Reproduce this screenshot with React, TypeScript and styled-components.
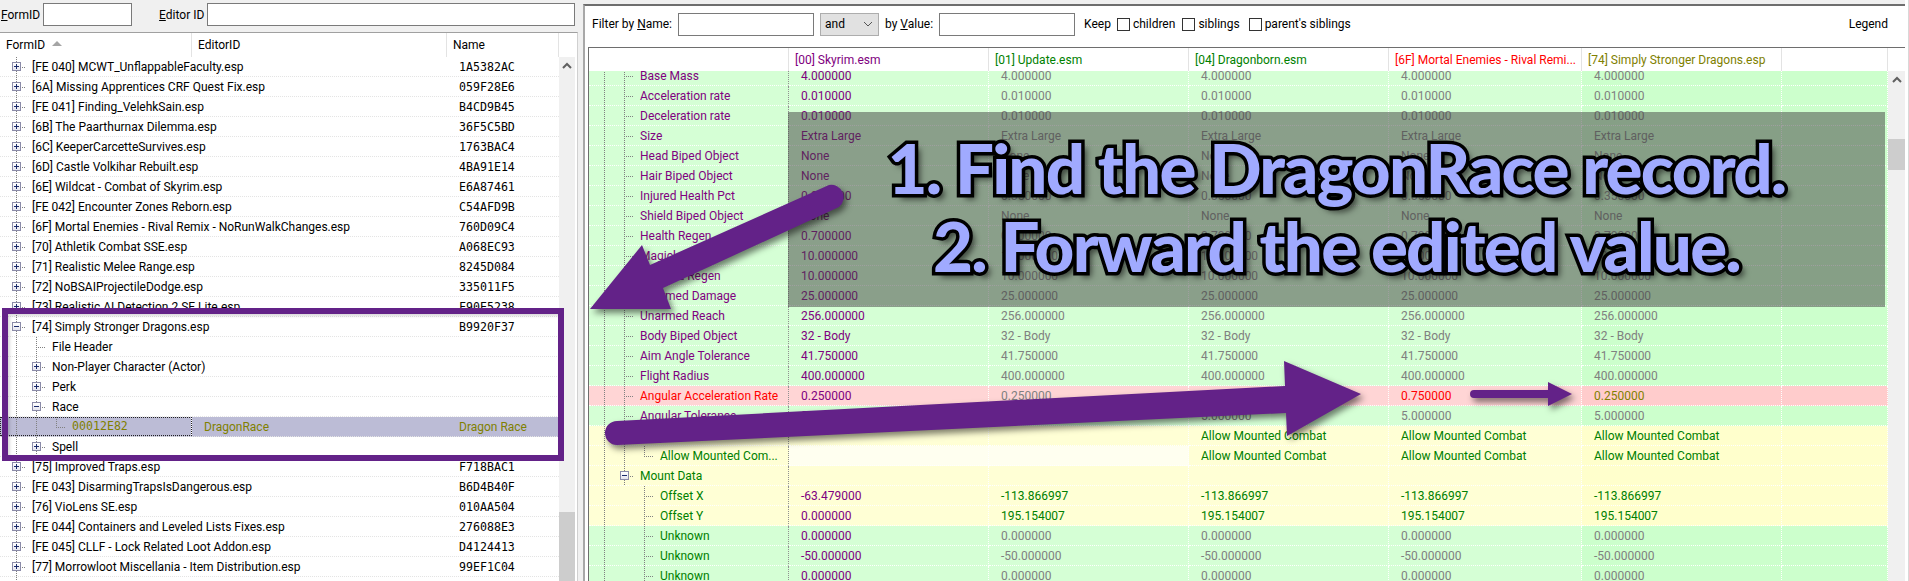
import React from 'react';
import styled, { createGlobalStyle } from 'styled-components';

const GlobalStyle = createGlobalStyle`
  html, body {
    margin: 0;
    padding: 0;
    background: #f0f0f0;
  }
  body {
    font-family: Roboto, 'Liberation Sans', sans-serif;
    font-size: 12px;
    color: #000;
    overflow: hidden;
  }
`;

const PURPLE = '#632288';
const dotsV = 'repeating-linear-gradient(to bottom, #808080 0 1px, transparent 1px 2px)';
const dotsH = 'repeating-linear-gradient(to right, #808080 0 1px, transparent 1px 2px)';

const Page = styled.div`
  position: relative;
  display: flex;
  width: 1909px;
  height: 581px;
  overflow: hidden;
`;

const LeftPane = styled.div`
  display: flex;
  flex-direction: column;
  width: 578px;
  flex: none;
`;

const IdFilter = styled.div`
  display: flex;
  align-items: center;
  height: 32px;
  padding: 0 3px 3px 1px;
  box-sizing: border-box;
`;

const IdLabel = styled.label<{ $gap?: number }>`
  margin-left: ${(p) => p.$gap || 0}px;
  margin-right: 3px;
`;

const TextBox = styled.div<{ $width?: number; $grow?: boolean; $gap?: number }>`
  height: 23px;
  box-sizing: border-box;
  margin-left: ${(p) => p.$gap || 0}px;
  background: #fff;
  border: 1px solid #7a7a7a;
  width: ${(p) => (p.$width ? `${p.$width}px` : 'auto')};
  flex: ${(p) => (p.$grow ? '1' : 'none')};
`;

const TreePanel = styled.div`
  flex: 1;
  display: flex;
  flex-direction: column;
  min-height: 0;
  background: #fff;
  border-top: 1px solid #a0a0a0;
  border-right: 1px solid #d0d0d0;
`;

const TreeHeader = styled.div`
  display: flex;
  height: 24px;
  flex: none;
`;

const HeadCell = styled.div<{ $width: number; $pad?: number; $color?: string }>`
  display: flex;
  align-items: center;
  flex: none;
  box-sizing: border-box;
  width: ${(p) => p.$width}px;
  padding-left: ${(p) => p.$pad ?? 6}px;
  border-right: 1px solid #e3e3e3;
  color: ${(p) => p.$color || '#000'};
`;

const SortMark = styled.span`
  width: 0;
  height: 0;
  margin: -3px 0 0 7px;
  border-left: 5px solid transparent;
  border-right: 5px solid transparent;
  border-bottom: 5px solid #a5a5a5;
`;

const TreeBody = styled.div`
  flex: 1;
  display: flex;
  min-height: 0;
`;

const TreeRows = styled.div`
  width: 559px;
  overflow: hidden;
`;

const TreeRowBox = styled.div<{ $selected?: boolean }>`
  display: flex;
  height: 20px;
  box-sizing: border-box;
  border-bottom: 1px dotted #e4e4e4;
  background: ${(p) => (p.$selected ? '#bcbcd6' : 'transparent')};
  color: ${(p) => (p.$selected ? '#808000' : '#000')};
`;

const NodeCell = styled.div<{ $width: number; $start: number; $focus?: boolean }>`
  display: flex;
  flex: none;
  box-sizing: border-box;
  width: ${(p) => p.$width}px;
  padding-left: ${(p) => p.$start}px;
  border-right: 1px ${(p) => (p.$focus ? 'solid #fff' : 'solid transparent')};
  outline: ${(p) => (p.$focus ? '1px dotted #222' : 'none')};
  outline-offset: -1px;
`;

type SlotKind = 'none' | 'line' | 'tee' | 'elbow' | 'plus' | 'minus';

const Slot = styled.span<{ $kind: SlotKind }>`
  display: flex;
  align-items: center;
  justify-content: center;
  flex: none;
  width: 20px;
  background-image: ${(p) => (p.$kind === 'none' ? 'none' : `${dotsV}, ${dotsH}`)};
  background-repeat: no-repeat;
  background-position: 10px 0, right 10px;
  background-size: 1px ${(p) => (p.$kind === 'elbow' ? '50%' : '100%')},
    ${(p) => (p.$kind === 'line' ? '0' : '10px')} 1px;
`;

const Expander = styled.span<{ $open?: boolean }>`
  position: relative;
  width: 9px;
  height: 9px;
  box-sizing: border-box;
  border: 1px solid #8b8ba8;
  background: linear-gradient(#fff, #e4e4ee);

  &::before {
    content: '';
    position: absolute;
    left: 1px;
    right: 1px;
    top: 3px;
    height: 1px;
    background: #1a2a6a;
  }
  &::after {
    content: '';
    position: absolute;
    display: ${(p) => (p.$open ? 'none' : 'block')};
    top: 1px;
    bottom: 1px;
    left: 3px;
    width: 1px;
    background: #1a2a6a;
  }
`;

const NodeText = styled.span<{ $color?: string }>`
  margin-left: 6px;
  line-height: 20px;
  white-space: nowrap;
  color: ${(p) => p.$color || 'inherit'};
`;

const MonoText = styled.span<{ $indent?: number }>`
  margin-left: ${(p) => p.$indent ?? 0}px;
  font-family: 'DejaVu Sans Mono', 'Liberation Mono', monospace;
  font-size: 11.6px;
  line-height: 19px;
`;

const PlainCell = styled.div<{ $width: number; $pad: number }>`
  flex: none;
  box-sizing: border-box;
  width: ${(p) => p.$width}px;
  padding-left: ${(p) => p.$pad}px;
  line-height: 20px;
  white-space: nowrap;
`;

const ScrollTrack = styled.div<{
  $width: number;
  $thumbTop: number;
  $thumbHeight: number;
  $offset?: number;
}>`
  position: relative;
  flex: none;
  width: ${(p) => p.$width}px;
  margin-top: ${(p) => p.$offset || 0}px;
  background: #f0f0f0;

  &::after {
    content: '';
    position: absolute;
    left: 0;
    right: 0;
    top: ${(p) => p.$thumbTop}px;
    height: ${(p) => p.$thumbHeight}px;
    background: #cdcdcd;
  }
`;

const ScrollUp = styled.svg`
  display: block;
  margin: 5px auto 0;
`;

const Splitter = styled.div`
  width: 5px;
  flex: none;
`;

const RightPane = styled.div`
  display: flex;
  flex-direction: column;
  flex: none;
  width: 1322px;
  margin-top: 4px;
  background: #fff;
  border-top: 2px solid #6e6e6e;
  border-left: 2px solid #a8a8a8;
  box-sizing: border-box;
`;

const EdgeStrip = styled.div`
  flex: 1;
  background: #fff;
  border-right: 1px solid #d8d8d8;
`;

const FilterBar = styled.div`
  display: flex;
  align-items: center;
  height: 41px;
  flex: none;
  padding: 0 17px 5px 7px;
  box-sizing: border-box;
`;

const FilterLabel = styled.label<{ $gap?: number }>`
  margin-left: ${(p) => p.$gap || 0}px;
  white-space: nowrap;
`;

const Combo = styled.div`
  display: flex;
  align-items: center;
  justify-content: space-between;
  width: 59px;
  height: 23px;
  margin-left: 6px;
  padding: 0 5px 0 4px;
  box-sizing: border-box;
  background: #e1e1e1;
  border: 1px solid #adadad;
`;

const Check = styled.span<{ $gap: number }>`
  width: 13px;
  height: 13px;
  flex: none;
  box-sizing: border-box;
  margin-left: ${(p) => p.$gap}px;
  margin-right: 3px;
  background: #fff;
  border: 1px solid #333;
`;

const Legend = styled.span`
  margin-left: auto;
`;

const GridWrap = styled.div`
  flex: 1;
  display: flex;
  min-height: 0;
  margin-left: 3px;
  border-top: 1px solid #6e6e6e;
  border-left: 1px solid #6e6e6e;
`;

const GridMain = styled.div`
  width: 1299px;
  flex: none;
  display: flex;
  flex-direction: column;
  overflow: hidden;
`;

const GridHeader = styled.div`
  display: flex;
  height: 23px;
  flex: none;
  background: #fff;
`;

const GridBody = styled.div`
  flex: 1;
  min-height: 0;
  overflow: hidden;
`;

const GridRows = styled.div`
  margin-top: -5px;
`;

type Tone = 'green' | 'yellow' | 'pink';
const toneFill: Record<Tone, [string, string]> = {
  green: ['#d5ffd5', '#ccffcc'],
  yellow: ['#ffffd5', '#ffffcc'],
  pink: ['#ffd5d5', '#ffcccc']
};

const GridRow = styled.div`
  display: flex;
  height: 20px;
`;

const LabelCell = styled.div<{ $tone: Tone }>`
  display: flex;
  flex: none;
  width: 200px;
  box-sizing: border-box;
  padding-left: 5px;
  background: ${(p) => toneFill[p.$tone][0]};
  border-bottom: 1px dotted #fff;
  border-right: 1px dotted #909090;
`;

const ValueCell = styled.div<{ $width: number; $fill: string; $color: string }>`
  flex: none;
  box-sizing: border-box;
  width: ${(p) => p.$width}px;
  padding-left: 12px;
  line-height: 20px;
  white-space: nowrap;
  background: ${(p) => p.$fill};
  color: ${(p) => p.$color};
  border-bottom: 1px dotted #fff;
  border-right: 1px dotted #fff;
`;

const Shade = styled.div`
  position: absolute;
  left: 788px;
  top: 112px;
  width: 1097px;
  height: 195px;
  display: flex;
  flex-direction: column;
  align-items: center;
  padding-top: 17px;
  box-sizing: border-box;
  background: rgba(64, 64, 64, 0.5);
`;

const Callout = styled.div`
  font-family: Lato, 'Open Sans', sans-serif;
  font-weight: 900;
  font-size: 69px;
  line-height: 78px;
  letter-spacing: -1.8px;
  white-space: nowrap;
  color: #a0aaff;
  -webkit-text-stroke: 7px #000;
  paint-order: stroke fill;
  text-shadow: 5px 5px 6px rgba(0, 0, 0, 0.6);
`;

const Frame = styled.div`
  position: absolute;
  left: 2px;
  top: 308px;
  width: 562px;
  height: 153px;
  box-sizing: border-box;
  border: 6px solid ${PURPLE};
  box-shadow: inset 2px 2px 3px rgba(0, 0, 0, 0.15);
`;

const Marks = styled.svg`
  position: absolute;
  left: 0;
  top: 0;
  pointer-events: none;
`;

const Arrow = styled.path`
  fill: ${PURPLE};
  filter: drop-shadow(3px 4px 3px rgba(0, 0, 0, 0.5));
`;

const Chevron = () => (
  <ScrollUp width="10" height="7" viewBox="0 0 10 7">
    <path d="M1 6 L5 2 L9 6" fill="none" stroke="#606060" strokeWidth="2" />
  </ScrollUp>
);

const tree: { slots: SlotKind[]; text: string; id?: string }[] = [
  { slots: ['plus'], text: '[FE 040] MCWT_UnflappableFaculty.esp', id: '1A5382AC' },
  { slots: ['plus'], text: '[6A] Missing Apprentices CRF Quest Fix.esp', id: '059F28E6' },
  { slots: ['plus'], text: '[FE 041] Finding_VelehkSain.esp', id: 'B4CD9B45' },
  { slots: ['plus'], text: '[6B] The Paarthurnax Dilemma.esp', id: '36F5C5BD' },
  { slots: ['plus'], text: '[6C] KeeperCarcetteSurvives.esp', id: '1763BAC4' },
  { slots: ['plus'], text: '[6D] Castle Volkihar Rebuilt.esp', id: '4BA91E14' },
  { slots: ['plus'], text: '[6E] Wildcat - Combat of Skyrim.esp', id: 'E6A87461' },
  { slots: ['plus'], text: '[FE 042] Encounter Zones Reborn.esp', id: 'C54AFD9B' },
  { slots: ['plus'], text: '[6F] Mortal Enemies - Rival Remix - NoRunWalkChanges.esp', id: '760D09C4' },
  { slots: ['plus'], text: '[70] Athletik Combat SSE.esp', id: 'A068EC93' },
  { slots: ['plus'], text: '[71] Realistic Melee Range.esp', id: '8245D084' },
  { slots: ['plus'], text: '[72] NoBSAIProjectileDodge.esp', id: '335011F5' },
  { slots: ['plus'], text: '[73] Realistic AI Detection 2 SE Lite.esp', id: 'F90E5238' },
  { slots: ['minus'], text: '[74] Simply Stronger Dragons.esp', id: 'B9920F37' },
  { slots: ['line', 'tee'], text: 'File Header' },
  { slots: ['line', 'plus'], text: 'Non-Player Character (Actor)' },
  { slots: ['line', 'plus'], text: 'Perk' },
  { slots: ['line', 'minus'], text: 'Race' },
  { slots: ['line', 'line', 'elbow'], text: '00012E82' },
  { slots: ['line', 'plus'], text: 'Spell' },
  { slots: ['plus'], text: '[75] Improved Traps.esp', id: 'F718BAC1' },
  { slots: ['plus'], text: '[FE 043] DisarmingTrapsIsDangerous.esp', id: 'B6D4B40F' },
  { slots: ['plus'], text: '[76] VioLens SE.esp', id: '010AA504' },
  { slots: ['plus'], text: '[FE 044] Containers and Leveled Lists Fixes.esp', id: '276088E3' },
  { slots: ['plus'], text: '[FE 045] CLLF - Lock Related Loot Addon.esp', id: 'D4124413' },
  { slots: ['plus'], text: '[77] Morrowloot Miscellania - Item Distribution.esp', id: '99EF1C04' },
  { slots: ['line'], text: '' }
];

const colWidths = [200, 200, 200, 193, 200, 106];
const columns = [
  { title: '[00] Skyrim.esm', color: '#800080' },
  { title: '[01] Update.esm', color: '#008000' },
  { title: '[04] Dragonborn.esm', color: '#008000' },
  { title: '[6F] Mortal Enemies - Rival Remi...', color: '#ff0000' },
  { title: '[74] Simply Stronger Dragons.esp', color: '#808000' }
];

const PUR = '#800080';
const GRY = '#808080';
const GRN = '#008000';
const RED = '#ff0000';
const OLV = '#808000';

type GridItem = {
  label: string;
  slots: SlotKind[];
  tone: Tone;
  labelColor: string;
  values: string[];
  colors: string[];
  pale?: boolean;
};

const conflictFree = (label: string, value: string, slots: SlotKind[] = ['line', 'tee']): GridItem => ({
  label,
  slots,
  tone: 'green',
  labelColor: PUR,
  values: [value, value, value, value, value],
  colors: [PUR, GRY, GRY, GRY, GRY]
});

const flagRow = (label: string, slots: SlotKind[], pale?: boolean): GridItem => ({
  label,
  slots,
  tone: 'yellow',
  labelColor: GRN,
  values: ['', '', 'Allow Mounted Combat', 'Allow Mounted Combat', 'Allow Mounted Combat'],
  colors: [GRN, GRN, GRN, GRN, GRN],
  pale
});

const offsetRow = (label: string, first: string, rest: string): GridItem => ({
  label,
  slots: ['line', 'none', 'tee'],
  tone: 'yellow',
  labelColor: GRN,
  values: [first, rest, rest, rest, rest],
  colors: [PUR, GRN, GRN, GRN, GRN]
});

const unknownRow = (value: string): GridItem => ({
  ...conflictFree('Unknown', value, ['line', 'none', 'tee']),
  labelColor: GRN
});

const grid: GridItem[] = [
  conflictFree('Base Mass', '4.000000'),
  conflictFree('Acceleration rate', '0.010000'),
  conflictFree('Deceleration rate', '0.010000'),
  conflictFree('Size', 'Extra Large'),
  conflictFree('Head Biped Object', 'None'),
  conflictFree('Hair Biped Object', 'None'),
  conflictFree('Injured Health Pct', '0.350000'),
  conflictFree('Shield Biped Object', 'None'),
  conflictFree('Health Regen', '0.700000'),
  conflictFree('Magicka Regen', '10.000000'),
  conflictFree('Stamina Regen', '10.000000'),
  conflictFree('Unarmed Damage', '25.000000'),
  conflictFree('Unarmed Reach', '256.000000'),
  conflictFree('Body Biped Object', '32 - Body'),
  conflictFree('Aim Angle Tolerance', '41.750000'),
  conflictFree('Flight Radius', '400.000000'),
  {
    label: 'Angular Acceleration Rate',
    slots: ['line', 'tee'],
    tone: 'pink',
    labelColor: RED,
    values: ['0.250000', '0.250000', '0.250000', '0.750000', '0.250000'],
    colors: [PUR, GRY, GRY, RED, OLV]
  },
  conflictFree('Angular Tolerance', '5.000000'),
  flagRow('Flags 3', ['line', 'minus']),
  flagRow('Allow Mounted Com...', ['line', 'line', 'elbow'], true),
  {
    label: 'Mount Data',
    slots: ['line', 'minus'],
    tone: 'yellow',
    labelColor: GRN,
    values: ['', '', '', '', ''],
    colors: [GRN, GRN, GRN, GRN, GRN]
  },
  offsetRow('Offset X', '-63.479000', '-113.866997'),
  offsetRow('Offset Y', '0.000000', '195.154007'),
  unknownRow('0.000000'),
  unknownRow('-50.000000'),
  unknownRow('0.000000')
];

const cellFill = (row: GridItem, col: number) => {
  if (row.pale && col < 2) return '#fffff0';
  return toneFill[row.tone][col === 4 ? 1 : 0];
};

const Slots = ({ slots }: { slots: SlotKind[] }) => (
  <>
    {slots.map((kind, i) => (
      <Slot key={i} $kind={kind}>
        {(kind === 'plus' || kind === 'minus') && <Expander $open={kind === 'minus'} />}
      </Slot>
    ))}
  </>
);

export default function App() {
  return (
    <Page>
      <GlobalStyle />
      <LeftPane>
        <IdFilter>
          <IdLabel><u>F</u>ormID</IdLabel>
          <TextBox $width={89} />
          <IdLabel $gap={27}><u>E</u>ditor ID</IdLabel>
          <TextBox $grow />
        </IdFilter>
        <TreePanel>
          <TreeHeader>
            <HeadCell $width={192}>FormID<SortMark /></HeadCell>
            <HeadCell $width={255}>EditorID</HeadCell>
            <HeadCell $width={112}>Name</HeadCell>
          </TreeHeader>
          <TreeBody>
            <TreeRows>
              {tree.map((row) => {
                const selected = row.text === '00012E82';
                return (
                  <TreeRowBox key={row.text + row.slots.length} $selected={selected}>
                    <NodeCell $width={selected ? 192 : 453} $start={6} $focus={selected}>
                      <Slots slots={row.slots} />
                      {selected ? <MonoText $indent={6}>{row.text}</MonoText> : <NodeText>{row.text}</NodeText>}
                    </NodeCell>
                    {selected && <PlainCell $width={255} $pad={12}>DragonRace</PlainCell>}
                    {selected && <PlainCell $width={112} $pad={12}>Dragon Race</PlainCell>}
                    {row.id && <PlainCell $width={106} $pad={6}><MonoText>{row.id}</MonoText></PlainCell>}
                  </TreeRowBox>
                );
              })}
            </TreeRows>
            <ScrollTrack $width={16} $thumbTop={455} $thumbHeight={70}>
              <Chevron />
            </ScrollTrack>
          </TreeBody>
        </TreePanel>
      </LeftPane>
      <Splitter />
      <RightPane>
        <FilterBar>
          <FilterLabel>Filter by <u>N</u>ame:</FilterLabel>
          <TextBox $width={136} $gap={6} />
          <Combo>
            and
            <svg width="10" height="6" viewBox="0 0 10 6">
              <path d="M1 1 L5 5 L9 1" fill="none" stroke="#555" strokeWidth="1" />
            </svg>
          </Combo>
          <FilterLabel $gap={6}>by <u>V</u>alue:</FilterLabel>
          <TextBox $width={136} $gap={6} />
          <FilterLabel $gap={9}>Keep</FilterLabel>
          <Check $gap={6} />children
          <Check $gap={7} />siblings
          <Check $gap={9} />parent's siblings
          <Legend>Legend</Legend>
        </FilterBar>
        <GridWrap>
          <GridMain>
            <GridHeader>
              <HeadCell $width={200} />
              {columns.map((c, i) => (
                <HeadCell key={c.title} $width={colWidths[i]} $color={c.color}>{c.title}</HeadCell>
              ))}
              <HeadCell $width={colWidths[5]} />
            </GridHeader>
            <GridBody>
              <GridRows>
                {grid.map((row, r) => (
                  <GridRow key={r}>
                    <LabelCell $tone={row.tone}>
                      <Slots slots={row.slots} />
                      <NodeText $color={row.labelColor}>{row.label}</NodeText>
                    </LabelCell>
                    {row.values.map((v, c) => (
                      <ValueCell key={c} $width={colWidths[c]} $fill={cellFill(row, c)} $color={row.colors[c]}>
                        {v}
                      </ValueCell>
                    ))}
                    <ValueCell $width={colWidths[5]} $fill={toneFill[row.tone][1]} $color={GRY} />
                  </GridRow>
                ))}
              </GridRows>
            </GridBody>
          </GridMain>
          <ScrollTrack $width={17} $thumbTop={68} $thumbHeight={31} $offset={23}>
            <Chevron />
          </ScrollTrack>
        </GridWrap>
      </RightPane>
      <EdgeStrip />

      <Shade>
        <Callout>1. Find the DragonRace record.</Callout>
        <Callout>2. Forward the edited value.</Callout>
      </Shade>
      <Frame />
      <Marks width="1909" height="581" viewBox="0 0 1909 581">
        <Arrow d="M829 185 L650 265 L642 245 L590 309 L671 309 L663 288 L839 207 A12.5 12.5 0 0 0 829 185 Z" />
        <Arrow d="M617 421 L1285 386 L1284 361 L1361 394 L1287 436 L1286 413 L617 445 A12 12 0 0 1 617 421 Z" />
        <Arrow d="M1474 390 L1548 390 L1548 382 L1572 394 L1548 406 L1548 398 L1474 398 A4 4 0 0 1 1474 390 Z" />
      </Marks>
    </Page>
  );
}
